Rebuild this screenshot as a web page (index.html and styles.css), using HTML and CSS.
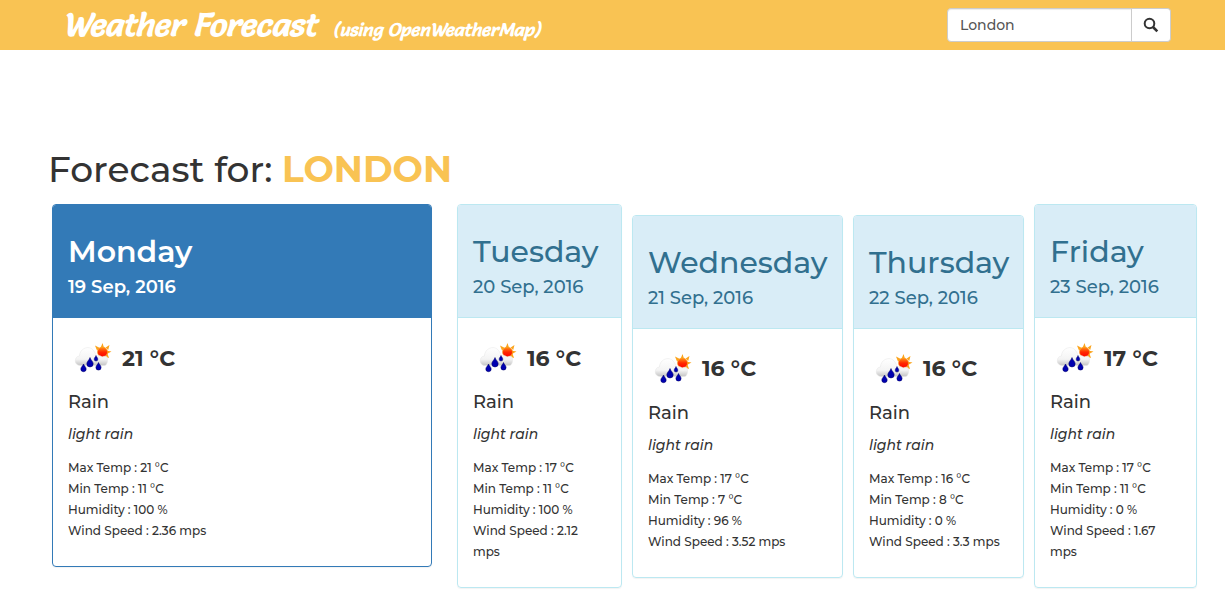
FILE: index.html
```html
<!DOCTYPE html>
<html lang="en">
<head>
<meta charset="utf-8">
<title>Weather Forecast</title>
<link rel="stylesheet" href="styles.css">
</head>
<body>
<svg class="defs" width="0" height="0" aria-hidden="true">
  <defs>
    <linearGradient id="cloud" x1="0" y1="0" x2="0" y2="1">
      <stop offset="0" stop-color="#ffffff"/><stop offset=".65" stop-color="#f4f4f4"/><stop offset="1" stop-color="#c4c4c4"/>
    </linearGradient>
    <linearGradient id="sun" x1="0" y1="0" x2="0" y2="1">
      <stop offset="0" stop-color="#ff9a1a"/><stop offset=".5" stop-color="#ff2a00"/><stop offset="1" stop-color="#ff0000"/>
    </linearGradient>
    <symbol id="rain" viewBox="0 0 50 50">
      <path fill="#fba41c" d="M34.500 10l1.600 5h-3.600zM27 12.500l5 2.500-3 2.500zM41.500 12l-1.300 5-2.500-2.500zM43.500 18.500l-4.500-.7v3.200zM41 25l-1.500-4.500-3 3z"/>
      <circle cx="34.500" cy="19" r="5" fill="url(#sun)" stroke="#fba41c" stroke-width=".6"/>
      <path fill="url(#cloud)" stroke="#e4e4e4" stroke-width=".5" d="M12 32.500c-6 0-6.500-9-.5-9.500 0-8 11-12 15-4 1 1.500 1.500 3 1.500 4.500 3-1.500 5-.8 6 .5 1.500-.8 3-1 4.500-.6 2 3 1 8.600-2 9.100z"/>
      <g fill="#0000b0" stroke="#000064" stroke-width=".5">
        <path d="M15.500 31c.6 2 2.700 3 2.700 5a2.700 2.700 0 0 1-5.400 0c0-2 2.100-3 2.700-5zM22 24.500c.7 2.500 3.200 4 3.200 6.300a3.200 3.200 0 0 1-6.400 0c0-2.300 2.500-3.800 3.200-6.300zM30.500 29.500c.6 2 2.600 3 2.600 5a2.600 2.600 0 0 1-5.200 0c0-2 2-3 2.600-5zM28 22.500c.4 1.500 1.800 2.200 1.800 3.700a1.800 1.800 0 0 1-3.600 0c0-1.500 1.400-2.200 1.800-3.700z"/>
      </g>
    </symbol>
  </defs>
</svg>

<header class="navbar">
  <a class="brand" href="#">Weather Forecast <small>(using OpenWeatherMap)</small></a>
  <form class="search" role="search">
    <input type="text" aria-label="City" value="London">
    <button type="submit" aria-label="Search">
      <svg width="16" height="16" viewBox="0 0 16 16" fill="none" stroke="#333"><circle cx="6.500" cy="6.500" r="4.800" stroke-width="2"/><path d="M10 10l4.300 4.300" stroke-width="2.600"/></svg>
    </button>
  </form>
</header>

<main class="content">
  <h1>Forecast for: <strong>LONDON</strong></h1>
  <div class="forecast">
    <article class="card today">
      <header><h2>Monday</h2><p>19 Sep, 2016</p></header>
      <div class="body">
        <div class="temp"><svg><use href="#rain"/></svg><strong>21 °C</strong></div>
        <h3>Rain</h3><p class="desc">light rain</p>
        <ul><li>Max Temp : 21 °C</li><li>Min Temp : 11 °C</li><li>Humidity : 100 %</li><li>Wind Speed : 2.36 mps</li></ul>
      </div>
    </article>
    <div class="days">
      <article class="card">
        <header><h2>Tuesday</h2><p>20 Sep, 2016</p></header>
        <div class="body">
          <div class="temp"><svg><use href="#rain"/></svg><strong>16 °C</strong></div>
          <h3>Rain</h3><p class="desc">light rain</p>
          <ul><li>Max Temp : 17 °C</li><li>Min Temp : 11 °C</li><li>Humidity : 100 %</li><li>Wind Speed : 2.12 mps</li></ul>
        </div>
      </article>
      <article class="card">
        <header><h2>Wednesday</h2><p>21 Sep, 2016</p></header>
        <div class="body">
          <div class="temp"><svg><use href="#rain"/></svg><strong>16 °C</strong></div>
          <h3>Rain</h3><p class="desc">light rain</p>
          <ul><li>Max Temp : 17 °C</li><li>Min Temp : 7 °C</li><li>Humidity : 96 %</li><li>Wind Speed : 3.52 mps</li></ul>
        </div>
      </article>
      <article class="card">
        <header><h2>Thursday</h2><p>22 Sep, 2016</p></header>
        <div class="body">
          <div class="temp"><svg><use href="#rain"/></svg><strong>16 °C</strong></div>
          <h3>Rain</h3><p class="desc">light rain</p>
          <ul><li>Max Temp : 16 °C</li><li>Min Temp : 8 °C</li><li>Humidity : 0 %</li><li>Wind Speed : 3.3 mps</li></ul>
        </div>
      </article>
      <article class="card">
        <header><h2>Friday</h2><p>23 Sep, 2016</p></header>
        <div class="body">
          <div class="temp"><svg><use href="#rain"/></svg><strong>17 °C</strong></div>
          <h3>Rain</h3><p class="desc">light rain</p>
          <ul><li>Max Temp : 17 °C</li><li>Min Temp : 11 °C</li><li>Humidity : 0 %</li><li>Wind Speed : 1.67 mps</li></ul>
        </div>
      </article>
    </div>
  </div>
</main>
</body>
</html>
```
FILE: styles.css
```css
* { box-sizing: border-box; }
body {
  margin: 0;
  background: #fff;
  color: #333;
  font-family: Montserrat, Inter, sans-serif;
  font-size: 14px;
  font-weight: 500;
}
h1, h2, h3, p, ul { margin: 0; padding: 0; font-weight: 500; }
ul { list-style: none; }
.defs { position: absolute; }

.navbar {
  display: flex;
  align-items: flex-start;
  justify-content: space-between;
  min-height: 50px;
  padding: 8px 54px 0 62px;
  background: #f9c353;
}
.brand {
  color: #fff;
  font: italic 700 32px/34px Salsa, Merienda, "DejaVu Sans", sans-serif;
  text-decoration: none;
}
.brand small { margin-left: 8px; font-size: 18px; line-height: 20px; }
.search { display: flex; }
.search input {
  width: 185px;
  height: 34px;
  padding: 0 12px;
  border: 1px solid #ccc;
  border-radius: 4px 0 0 4px;
  background: #fff;
  box-shadow: inset 0 1px 1px rgba(0, 0, 0, .075);
  color: #555;
  font: inherit;
}
.search button {
  display: flex;
  align-items: center;
  justify-content: center;
  width: 39px;
  padding: 0;
  border: 1px solid #ccc;
  border-left: 0;
  border-radius: 0 4px 4px 0;
  background: #fff;
}

.content { padding: 99px 28px 28px 48px; }
h1 { font-size: 36px; line-height: 40px; }
h1 strong { color: #f9c353; font-weight: 700; }

.forecast {
  display: grid;
  grid-template-columns: minmax(0, 380fr) minmax(0, 740fr);
  align-items: start;
  gap: 25px;
  margin: 15px 0 0 4px;
}
.days {
  display: grid;
  grid-template-columns: 165fr 211fr 171fr 163fr;
  align-items: center;
  gap: 10px;
}
.card {
  min-width: 0;
  border: 1px solid #bce8f1;
  border-radius: 4px;
  box-shadow: 0 1px 1px rgba(0, 0, 0, .05);
}
.card header {
  padding: 30px 15px 20px;
  border-bottom: 1px solid #bce8f1;
  border-radius: 3px 3px 0 0;
  background: #d9edf7;
  color: #31708f;
}
.card h2 { font-size: 30px; line-height: 33px; }
.card header p { margin-top: 9px; font-size: 18px; line-height: 20px; }
.today { border-color: #337ab7; }
.today header { border-color: #337ab7; background: #337ab7; color: #fff; }
.today h2, .today header p { font-weight: 600; }

.body { padding: 15px 15px 25px; }
.temp { display: flex; align-items: center; gap: 4px; font-size: 22px; }
.temp svg { width: 50px; height: 50px; }
.card h3 { margin-top: 9px; font-size: 18px; line-height: 20px; }
.desc { margin: 12px 0; font-style: italic; line-height: 21px; }
.card li { font-size: 12px; line-height: 21px; }
```
